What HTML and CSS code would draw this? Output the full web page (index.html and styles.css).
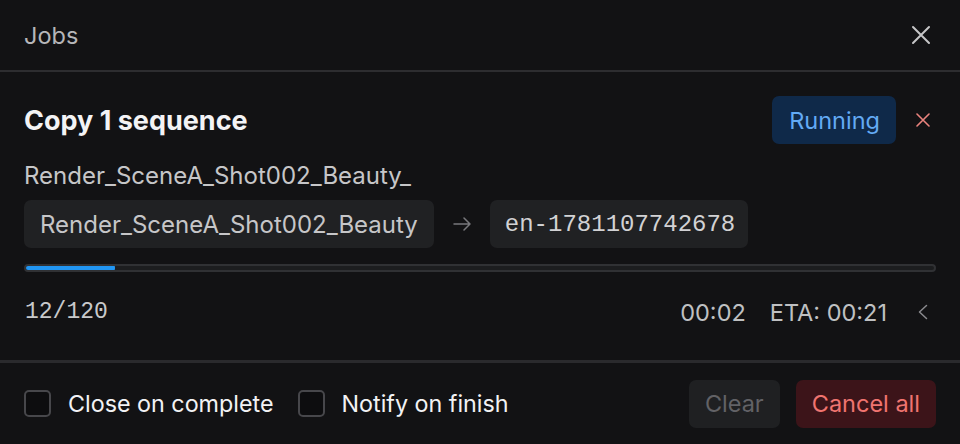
FILE: index.html
```html
<!DOCTYPE html>
<html>
<head>
<meta charset="utf-8">
<link rel="stylesheet" href="styles.css">
</head>
<body>
<div class="dialog">
  <header class="header">
    <span class="header-title">Jobs</span>
    <button class="icon-btn close-btn" aria-label="Close">
      <svg width="20" height="20" viewBox="0 0 20 20"><path d="M2 2L18 18M18 2L2 18" stroke="currentColor" stroke-width="2" stroke-linecap="round"/></svg>
    </button>
  </header>
  <section class="job">
    <div class="job-top">
      <h2 class="job-title">Copy 1 sequence</h2>
      <div class="job-actions">
        <span class="badge">Running</span>
        <button class="icon-btn cancel-x" aria-label="Cancel">
          <svg width="14" height="14" viewBox="0 0 14 14"><path d="M1 1L13 13M13 1L1 13" stroke="currentColor" stroke-width="1.6" stroke-linecap="round"/></svg>
        </button>
      </div>
    </div>
    <div class="job-name">Render_SceneA_Shot002_Beauty_</div>
    <div class="route">
      <span class="chip">Render_SceneA_Shot002_Beauty</span>
      <span class="arrow">
        <svg width="18" height="14" viewBox="0 0 18 14"><path d="M1 7H17M11 1L17 7L11 13" stroke="currentColor" stroke-width="1.5" fill="none" stroke-linecap="round" stroke-linejoin="round"/></svg>
      </span>
      <span class="chip chip-mono">en-1781107742678</span>
    </div>
    <div class="progress"><div class="progress-fill" style="width:10%"></div></div>
    <div class="stats">
      <span class="count">12/120</span>
      <div class="times">
        <span>00:02</span>
        <span>ETA: 00:21</span>
        <span class="chev">
          <svg width="10" height="16" viewBox="0 0 10 16"><path d="M8.5 1.5L1.5 8L8.5 14.5" stroke="currentColor" stroke-width="1.5" fill="none" stroke-linecap="round" stroke-linejoin="round"/></svg>
        </span>
      </div>
    </div>
  </section>
  <footer class="footer">
    <div class="options">
      <label class="check"><span class="box"></span>Close on complete</label>
      <label class="check"><span class="box"></span>Notify on finish</label>
    </div>
    <div class="buttons">
      <button class="btn btn-clear">Clear</button>
      <button class="btn btn-danger">Cancel all</button>
    </div>
  </footer>
</div>
</body>
</html>
```
FILE: styles.css
```css
* { box-sizing: border-box; }
html, body { margin: 0; padding: 0; }
body {
  background: #121214;
  font-family: Inter, "Noto Sans", sans-serif;
  color: #e8e8e8;
  width: 960px;
  height: 444px;
  overflow: hidden;
}
.dialog { display: flex; flex-direction: column; height: 444px; }
.header {
  height: 72px;
  flex: none;
  display: flex;
  align-items: center;
  justify-content: space-between;
  padding: 0 29px 0 24px;
  border-bottom: 2px solid #2d2d30;
}
.header-title { font-size: 23.5px; color: #b6b6b9; }
.icon-btn {
  background: none; border: 0; padding: 0; cursor: pointer;
  display: flex; align-items: center; justify-content: center;
}
.close-btn { color: #c6c6c8; }
.job {
  flex: none;
  padding: 24px 24px 0 24px;
  border-bottom: 3px solid #2a2a2d;
  height: 291px;
}
.job-top { display: flex; align-items: center; justify-content: space-between; height: 48px; }
.job-title { margin: 0; font-size: 27px; font-weight: 700; color: #f3f3f5; }
.job-actions { display: flex; align-items: center; gap: 20px; }
.badge {
  background: #0f2949;
  color: #63aaf4;
  font-size: 23.5px;
  height: 48px;
  padding: 0 16px 0 17px;
  border-radius: 7px;
  display: flex; align-items: center;
}
.cancel-x { color: #ea837e; margin-right: 6px; }
.job-name { margin-top: 18px; font-size: 24px; color: #c6c6c8; line-height: 28px; }
.route { display: flex; align-items: center; margin-top: 10px; }
.chip {
  background: #202123;
  color: #c6c6c8;
  font-size: 24px;
  height: 48px;
  padding: 0 16px;
  border-radius: 7px;
  display: flex; align-items: center;
}
.chip-mono {
  font-family: "Liberation Mono", "DejaVu Sans Mono", monospace;
  color: #d2d2d4;
  padding: 0 13px 0 15px;
}
.arrow { color: #78787c; width: 56px; display: flex; justify-content: center; }
.progress {
  margin-top: 16px;
  height: 8px;
  border-radius: 4px;
  background: #1c1d1f;
  border: 2px solid #303134;
  overflow: hidden;
  position: relative;
}
.progress-fill {
  position: absolute; left: -2px; top: -2px; bottom: -2px;
  background: #2196f3;
  border-radius: 4px;
}
.stats {
  display: flex; align-items: center; justify-content: space-between;
  margin-top: 24px;
  height: 32px;
  font-size: 23.5px; color: #bfc0c2;
}
.count {
  font-family: "Liberation Mono", "DejaVu Sans Mono", monospace;
  font-size: 23px;
  color: #c8c9cb;
  padding-left: 1px;
}
.times { display: flex; align-items: center; gap: 24px; }
.chev { color: #8a8a8e; margin-left: 7px; margin-right: 8px; display: flex; }
.footer {
  flex: 1;
  display: flex; align-items: center; justify-content: space-between;
  padding: 0 24px;
}
.options { display: flex; align-items: center; gap: 24px; }
.check { display: flex; align-items: center; gap: 17px; font-size: 23.3px; color: #f2f2f4; }
.box {
  width: 27px; height: 27px;
  border: 2px solid #47474b;
  border-radius: 5px;
  background: #0d0d0f;
}
.buttons { display: flex; gap: 16px; }
.btn {
  height: 48px;
  border: 0;
  border-radius: 7px;
  font-family: inherit;
  font-size: 23.5px;
  padding: 0 16px;
}
.btn-clear { background: #1f2022; color: #626266; }
.btn-danger { background: #3c1419; color: #f07470; }
```
